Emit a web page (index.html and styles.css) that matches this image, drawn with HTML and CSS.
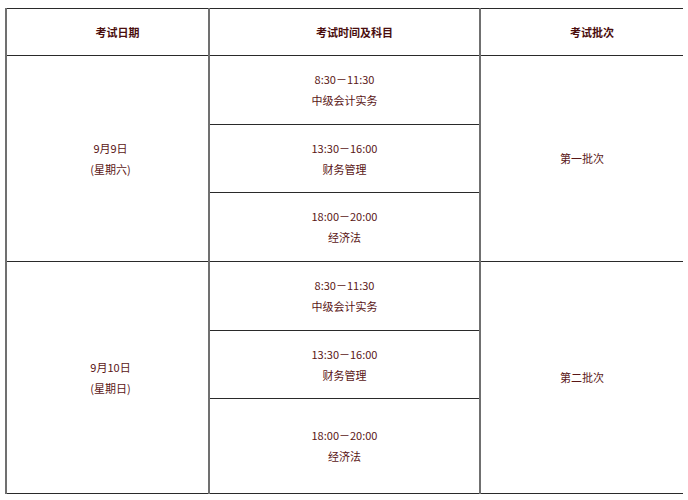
FILE: index.html
```html
<!DOCTYPE html>
<html lang="zh-CN">
<head>
<meta charset="utf-8">
<title>考试安排</title>
<link rel="stylesheet" href="styles.css">
</head>
<body>
<table class="exam">
  <colgroup>
    <col class="c1">
    <col class="c2">
    <col class="c3">
  </colgroup>
  <thead>
    <tr class="head">
      <th>考试日期</th>
      <th>考试时间及科目</th>
      <th>考试批次</th>
    </tr>
  </thead>
  <tbody>
    <tr class="r69">
      <td rowspan="3" class="date"><p>9月9日</p><p>(星期六)</p></td>
      <td><p class="time">8:30－11:30</p><p>中级会计实务</p></td>
      <td rowspan="3"><p>第一批次</p></td>
    </tr>
    <tr class="r68">
      <td><p class="time">13:30－16:00</p><p>财务管理</p></td>
    </tr>
    <tr class="r69">
      <td><p class="time">18:00－20:00</p><p>经济法</p></td>
    </tr>
    <tr class="r69">
      <td rowspan="3" class="date"><p>9月10日</p><p>(星期日)</p></td>
      <td><p class="time">8:30－11:30</p><p>中级会计实务</p></td>
      <td rowspan="3"><p>第二批次</p></td>
    </tr>
    <tr class="r68">
      <td><p class="time">13:30－16:00</p><p>财务管理</p></td>
    </tr>
    <tr class="r95">
      <td><p class="time">18:00－20:00</p><p>经济法</p></td>
    </tr>
  </tbody>
</table>
</body>
</html>
```
FILE: styles.css
```css
html, body {
  background: #ffffff;
}
body {
  margin: 8px 5px;
  font-family: "Noto Sans CJK SC", "Liberation Sans", sans-serif;
  font-size: 11px;
  color: #5a1616;
}
.exam {
  border-collapse: collapse;
  table-layout: fixed;
  width: 678px;
}
.c1 { width: 203px; }
.c2 { width: 271px; }
.c3 { width: 204px; }
.exam th,
.exam td {
  border-top: 1px solid #2a2a2a;
  border-bottom: 1px solid #2a2a2a;
  border-left: 2px solid #707070;
  border-right: 2px solid #707070;
  text-align: center;
  vertical-align: middle;
  padding: 0;
}
.exam th {
  font-weight: bold;
  color: #4a0e0e;
  font-size: 11px;
  padding-left: 20px;
}
.exam td.date {
  padding-left: 6px;
}
.head { height: 47px; }
.r68 { height: 68px; }
.r69 { height: 69px; }
.r95 { height: 95px; }
.exam p {
  margin: 0;
  line-height: 21px;
}
.time {
  letter-spacing: 0;
}
```
